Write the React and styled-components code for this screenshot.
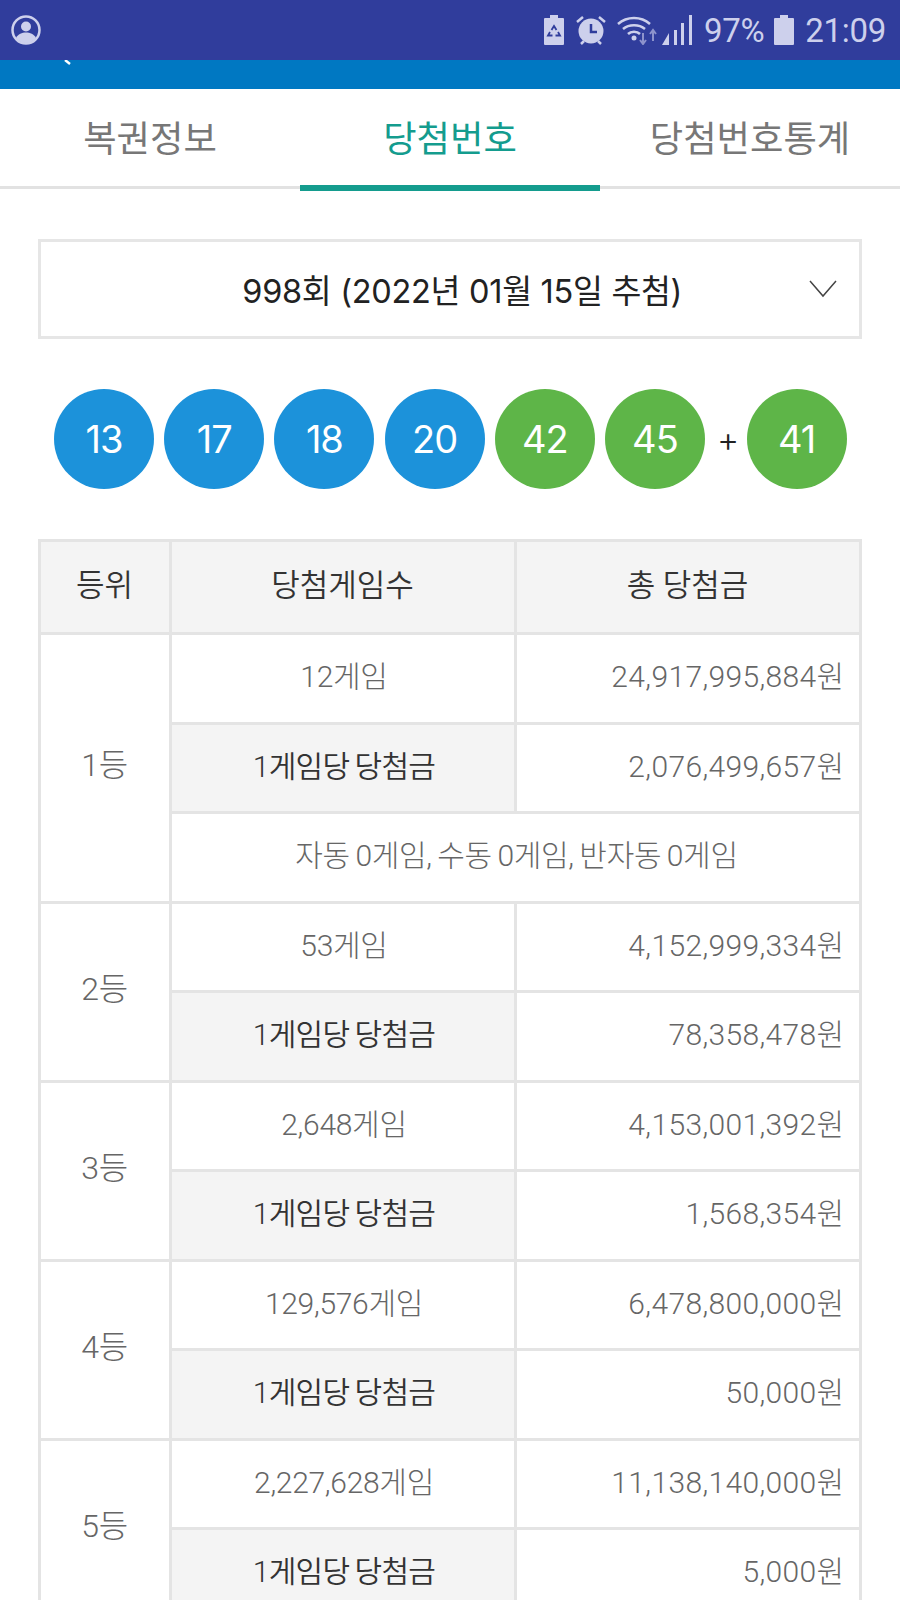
import React from "react";
import styled, { createGlobalStyle } from "styled-components";

const GlobalStyle = createGlobalStyle`
  html, body {
    margin: 0;
    padding: 0;
    background: #fff;
  }
  body {
    font-family: Roboto, "Noto Sans CJK KR", sans-serif;
  }
`;

const Page = styled.div`
  width: 900px;
  height: 1600px;
  overflow: hidden;
  background: #fff;
`;

const StatusBar = styled.div`
  height: 60px;
  background: #303d9c;
  color: #cdd0ec;
  display: flex;
  align-items: center;
  padding: 0 14px 0 10px;
`;

const StatusRight = styled.div`
  margin-left: auto;
  display: flex;
  align-items: center;
`;

const StatusText = styled.span`
  font-family: Roboto, sans-serif;
  font-size: 33px;
  letter-spacing: -0.3px;
  margin-left: ${({ $gap }) => $gap}px;
`;

const StatusIcon = styled.svg`
  display: block;
  margin-left: ${({ $gap }) => $gap || 0}px;
`;

const HeaderStrip = styled.div`
  height: 29px;
  background: #0078c2;
  padding-left: 62px;
  box-sizing: border-box;
`;

const SearchTail = styled.svg`
  display: block;
`;

const Tabs = styled.div`
  display: flex;
  height: 100px;
  border-bottom: 3px solid #e2e2e2;
  box-sizing: border-box;
`;

const Tab = styled.div`
  flex: 1;
  height: 102px;
  box-sizing: border-box;
  display: flex;
  align-items: center;
  justify-content: center;
  padding-bottom: 3px;
  font-family: "Noto Sans CJK KR", sans-serif;
  font-size: 36.3px;
  color: ${({ $active }) => ($active ? "#149c8e" : "#777")};
  border-bottom: 6px solid ${({ $active }) => ($active ? "#149c8e" : "transparent")};
`;

const Content = styled.div`
  padding: 50px 38px 0 37.5px;
`;

const Select = styled.div`
  height: 100px;
  box-sizing: border-box;
  border: 3px solid #e6e6e6;
  display: flex;
  align-items: center;
  justify-content: center;
  padding: 0 0 2px 25px;
  position: relative;
  font-family: Inter, "Noto Sans CJK KR", sans-serif;
  font-size: 32.5px;
  font-weight: 400;
  letter-spacing: -0.3px;
  color: #222;
`;

const Chevron = styled.svg`
  position: absolute;
  right: 22px;
  top: 38px;
`;

const Balls = styled.div`
  display: flex;
  align-items: center;
  margin: 50px 0 50px 16.5px;
  height: 100px;
`;

const Ball = styled.div`
  width: 100px;
  height: 100px;
  border-radius: 50%;
  flex: none;
  margin-right: 10.2px;
  background: ${({ $green }) => ($green ? "#5eb548" : "#1c92da")};
  color: #fff;
  display: flex;
  align-items: center;
  justify-content: center;
  font-family: Inter, sans-serif;
  font-size: 38px;
  letter-spacing: -1px;
`;

const Plus = styled.div`
  width: 32px;
  margin: 0 2.5px 0 -3px;
  text-align: center;
  font-family: Inter, sans-serif;
  font-size: 34px;
  font-weight: 300;
  color: #222;
`;

const Table = styled.table`
  width: 821px;
  table-layout: fixed;
  border-collapse: collapse;
  font-family: Roboto, "Noto Sans CJK KR", sans-serif;
  font-size: 30px;
  font-weight: 300;
  color: #666;
`;

const Cell = styled.td`
  height: 89.5px;
  box-sizing: border-box;
  padding: 0 14px 8px 17px;
  border: 3px solid #e4e4e4;
  word-spacing: -1.5px;
  text-align: ${({ $right }) => ($right ? "right" : "center")};
  letter-spacing: ${({ $right, $shade }) => ($right ? "0.35px" : $shade ? "-0.7px" : "-0.3px")};
  background: ${({ $shade }) => ($shade ? "#f4f4f4" : "#fff")};
  color: ${({ $shade }) => ($shade ? "#333" : "#666")};
  font-weight: ${({ $shade }) => ($shade ? 350 : 300)};
`;

const RankCell = styled(Cell)`
  font-size: 32px;
  padding: 0 17px 12px;
`;

const HeadCell = styled(Cell).attrs({ as: "th", $shade: true })`
  height: 93px;
  font-size: 31px;
  letter-spacing: 0;
  word-spacing: 0;
  padding: 0 17px 10px;
`;

const rows = [
  { rank: "1등", games: "12게임", total: "24,917,995,884원", each: "2,076,499,657원", note: "자동 0게임, 수동 0게임, 반자동 0게임" },
  { rank: "2등", games: "53게임", total: "4,152,999,334원", each: "78,358,478원" },
  { rank: "3등", games: "2,648게임", total: "4,153,001,392원", each: "1,568,354원" },
  { rank: "4등", games: "129,576게임", total: "6,478,800,000원", each: "50,000원" },
  { rank: "5등", games: "2,227,628게임", total: "11,138,140,000원", each: "5,000원" },
];

const numbers = [13, 17, 18, 20];

const App = () => (
  <>
    <GlobalStyle />
    <Page>
      <StatusBar>
        <svg width="32" height="32" viewBox="0 0 32 32">
          <circle cx="16" cy="16" r="13.5" fill="none" stroke="currentColor" strokeWidth="2.5" />
          <circle cx="16" cy="12.5" r="5" fill="currentColor" />
          <path d="M6 24c2-4 6-5.5 10-5.5s8 1.500 10 5.500c-2.500 3-6 5-10 5s-7.500-2-10-5z" fill="currentColor" />
        </svg>
        <StatusRight>
          <StatusIcon width="20" height="30" viewBox="0 0 20 30">
            <path d="M6 0h8v3h5a1 1 0 0 1 1 1v25a1 1 0 0 1-1 1H1a1 1 0 0 1-1-1V4a1 1 0 0 1 1-1h5z" fill="currentColor" />
            <path d="M7.500 15l2.500-4 2.500 4M14 17l2 3.500h-4.500M6 17l-2 3.500h4.500" fill="none" stroke="#303d9c" strokeWidth="1.800" />
          </StatusIcon>
          <StatusIcon $gap={12} width="30" height="30" viewBox="0 0 30 30">
            <circle cx="15" cy="16" r="12.500" fill="currentColor" />
            <path d="M15 9v8h6" fill="none" stroke="#303d9c" strokeWidth="2.500" />
            <path d="M1 7l6-5M29 7l-6-5M5 29l3-3M25 29l-3-3" stroke="currentColor" strokeWidth="2.500" />
          </StatusIcon>
          <StatusIcon $gap={11} width="40" height="30" viewBox="0 0 40 30">
            <path d="M1 9c9-8 23-8 32 0M6 14c6-5 16-5 22 0M11 19c3-3 9-3 12 0" fill="none" stroke="currentColor" strokeWidth="2.500" />
            <circle cx="17" cy="23" r="2.500" fill="currentColor" />
            <path d="M26 18v10M23 25l3 4 3-4" fill="none" stroke="#8d93cc" strokeWidth="2" />
            <path d="M36 26V16M33 19l3-4 3 4" fill="none" stroke="#8d93cc" strokeWidth="2" />
          </StatusIcon>
          <StatusIcon $gap={5} width="30" height="30" viewBox="0 0 30 30">
            <path d="M0 30l7-12v12z" fill="currentColor" />
            <path d="M12 15h3v15h-3zM19 8h3v22h-3zM27 0h3v30h-3z" fill="currentColor" />
          </StatusIcon>
          <StatusText $gap={12}>97%</StatusText>
          <StatusIcon $gap={10} width="20" height="30" viewBox="0 0 20 30">
            <path d="M6 0h8v3h5a1 1 0 0 1 1 1v25a1 1 0 0 1-1 1H1a1 1 0 0 1-1-1V4a1 1 0 0 1 1-1h5z" fill="currentColor" />
          </StatusIcon>
          <StatusText $gap={11}>21:09</StatusText>
        </StatusRight>
      </StatusBar>
      <HeaderStrip>
        <SearchTail width="10" height="5" viewBox="0 0 10 5">
          <path d="M3 0l5 4" stroke="#fff" strokeWidth="2.500" />
        </SearchTail>
      </HeaderStrip>
      <Tabs>
        <Tab>복권정보</Tab>
        <Tab $active>당첨번호</Tab>
        <Tab>당첨번호통계</Tab>
      </Tabs>
      <Content>
        <Select>
          998회 (2022년 01월 15일 추첨)
          <Chevron width="28" height="18" viewBox="0 0 28 18">
            <path d="M1 1l13 15L27 1" fill="none" stroke="#444" strokeWidth="1.500" />
          </Chevron>
        </Select>
        <Balls>
          {numbers.map((n) => (
            <Ball key={n}>{n}</Ball>
          ))}
          <Ball $green>42</Ball>
          <Ball $green>45</Ball>
          <Plus>+</Plus>
          <Ball $green>41</Ball>
        </Balls>
        <Table>
          <colgroup>
            <col width="131" />
            <col width="345" />
            <col width="345" />
          </colgroup>
          <thead>
            <tr>
              <HeadCell>등위</HeadCell>
              <HeadCell>당첨게임수</HeadCell>
              <HeadCell>총 당첨금</HeadCell>
            </tr>
          </thead>
          <tbody>
            {rows.map((row) => (
              <React.Fragment key={row.rank}>
                <tr>
                  <RankCell rowSpan={row.note ? 3 : 2}>{row.rank}</RankCell>
                  <Cell>{row.games}</Cell>
                  <Cell $right>{row.total}</Cell>
                </tr>
                <tr>
                  <Cell $shade>1게임당 당첨금</Cell>
                  <Cell $right>{row.each}</Cell>
                </tr>
                {row.note && (
                  <tr>
                    <Cell colSpan={2}>{row.note}</Cell>
                  </tr>
                )}
              </React.Fragment>
            ))}
          </tbody>
        </Table>
      </Content>
    </Page>
  </>
);

export default App;
